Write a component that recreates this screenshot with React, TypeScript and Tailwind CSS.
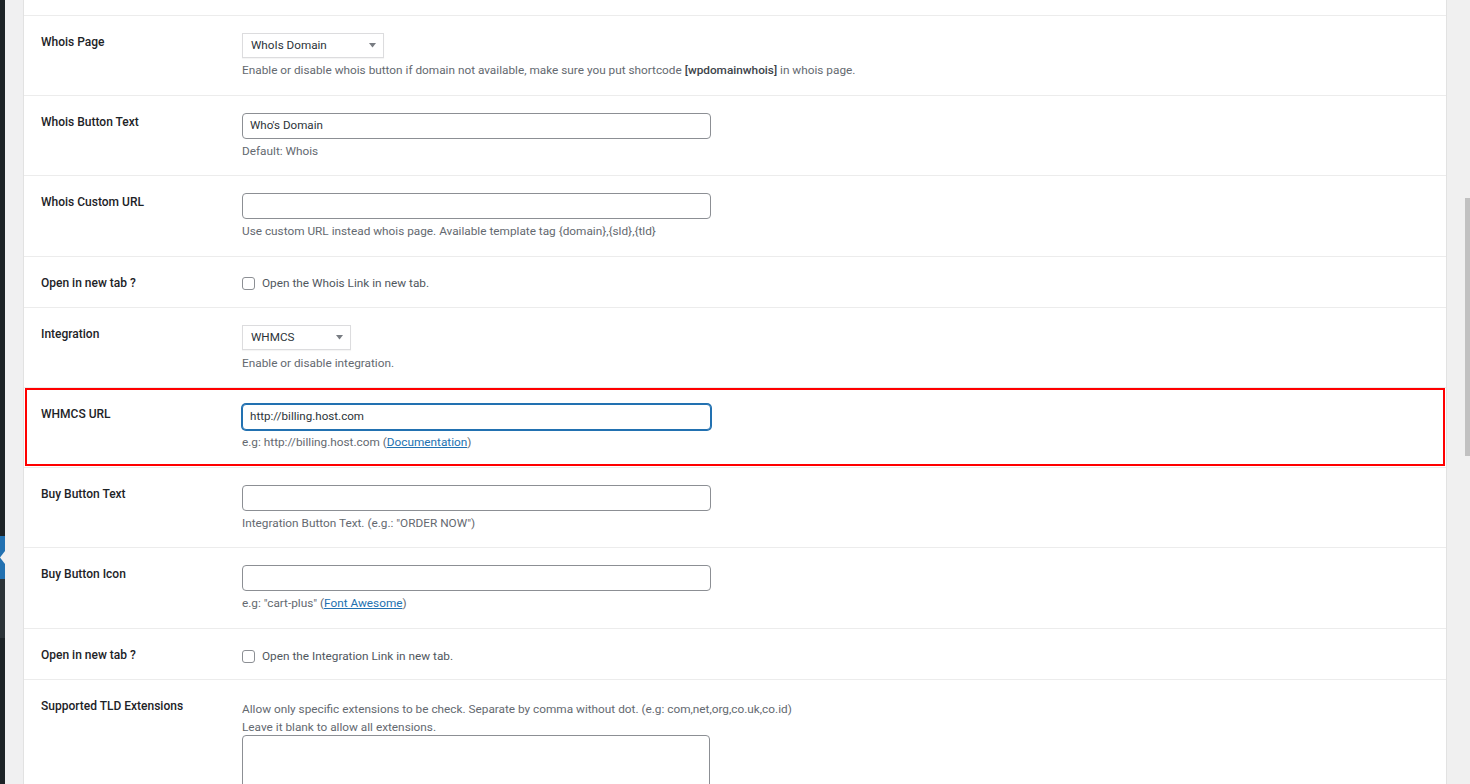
import React from "react";

const font = { fontFamily: 'Roboto, "Noto Sans", Arial, sans-serif' };

function Label({ children, pt = "pt-[17px]" }: { children: React.ReactNode; pt?: string }) {
  return (
    <div className={`w-[201px] shrink-0 ${pt} text-[12px] leading-[18px] font-medium text-[#1d2327]`}>
      {children}
    </div>
  );
}

function Desc({ children, className = "" }: { children: React.ReactNode; className?: string }) {
  return <div className={`text-[11.8px] leading-[18px] text-[#646970] ${className}`}>{children}</div>;
}

function Select({ value, width }: { value: string; width: string }) {
  return (
    <div
      className={`${width} h-[25px] flex items-center justify-between border border-[#dcdcde] bg-white shadow-[0_1px_1px_rgba(0,0,0,0.04)] pl-[8px] pr-[7px] text-[11.7px] text-[#2c3338]`}
    >
      <span>{value}</span>
      <svg width="7" height="5" viewBox="0 0 7 5">
        <path d="M0 0h7L3.5 4.5z" fill="#787c82" />
      </svg>
    </div>
  );
}

function TextInput({ value = "", focus = false }: { value?: string; focus?: boolean }) {
  return (
    <div
      className={`w-[469px] h-[26px] flex items-center rounded-[4px] border bg-white px-[7px] text-[11.6px] text-[#2c3338] ${
        focus ? "border-[#2271b1] shadow-[0_0_0_1px_#2271b1]" : "border-[#8c8f94]"
      }`}
    >
      {value}
    </div>
  );
}

function Checkbox({ label }: { label: string }) {
  return (
    <div className="flex items-center gap-[7px] text-[11.8px] text-[#50575e]">
      <div className="w-[13px] h-[13px] rounded-[3px] border border-[#8c8f94] bg-white" />
      <span>{label}</span>
    </div>
  );
}

function Row({ children, h = "h-[80px]", boxed = false }: { children: React.ReactNode; h?: string; boxed?: boolean }) {
  return (
    <div className={`relative shrink-0 ${h} border-t border-[#ececec] flex pl-[17px]`}>
      {boxed && (
        <div className="absolute left-[1px] right-[1px] top-0 bottom-[1px] border-2 border-[#ff0000] pointer-events-none" />
      )}
      {children}
    </div>
  );
}

export default function App() {
  return (
    <div className="w-[1470px] h-[784px] flex overflow-hidden bg-white" style={font}>
      {/* admin sidebar edge */}
      <div className="w-[5px] shrink-0 flex flex-col bg-[#1d2327]">
        <div className="h-[536px] shrink-0" />
        <div className="h-[43px] shrink-0 bg-[#2271b1] relative">
          <svg className="absolute left-0 top-[15px]" width="5" height="13" viewBox="0 0 5 13">
            <path d="M5 0v13L0 6.5z" fill="#f0f0f1" />
          </svg>
        </div>
        <div className="h-[59px] shrink-0 bg-[#2c3338]" />
        <div className="flex-1" />
      </div>
      {/* gutter */}
      <div className="w-[18px] shrink-0 bg-[#f0f0f1]" />
      {/* panel */}
      <div className="w-[1424px] shrink-0 bg-white border-l border-r border-[#e2e2e2] flex flex-col overflow-hidden">
        <div className="h-[15px] shrink-0" />
        <Row>
          <Label>Whois Page</Label>
          <div className="pt-[17px]">
            <Select value="WhoIs Domain" width="w-[142px]" />
            <Desc className="mt-[3px]">
              Enable or disable whois button if domain not available, make sure you put shortcode{" "}
              <b className="font-medium text-[#3c434a]">[wpdomainwhois]</b> in whois page.
            </Desc>
          </div>
        </Row>
        <Row>
          <Label>Whois Button Text</Label>
          <div className="pt-[17px]">
            <TextInput value="Who's Domain" />
            <Desc className="mt-[3px]">Default: Whois</Desc>
          </div>
        </Row>
        <Row h="h-[81px]">
          <Label>Whois Custom URL</Label>
          <div className="pt-[17px]">
            <TextInput />
            <Desc className="mt-[3px]">Use custom URL instead whois page. Available template tag {"{domain}"},{"{sld}"},{"{tld}"}</Desc>
          </div>
        </Row>
        <Row h="h-[51px]">
          <Label>Open in new tab ?</Label>
          <div className="pt-[18px]">
            <Checkbox label="Open the Whois Link in new tab." />
          </div>
        </Row>
        <Row>
          <Label>Integration</Label>
          <div className="pt-[17px]">
            <Select value="WHMCS" width="w-[109px]" />
            <Desc className="mt-[4px]">Enable or disable integration.</Desc>
          </div>
        </Row>
        <Row boxed>
          <Label>WHMCS URL</Label>
          <div className="pt-[16px]">
            <TextInput value="http://billing.host.com" focus />
            <Desc className="mt-[3px]">
              e.g: http://billing.host.com (<span className="text-[#2271b1] underline">Documentation</span>)
            </Desc>
          </div>
        </Row>
        <Row>
          <Label>Buy Button Text</Label>
          <div className="pt-[17px]">
            <TextInput />
            <Desc className="mt-[3px]">Integration Button Text. (e.g.: "ORDER NOW")</Desc>
          </div>
        </Row>
        <Row h="h-[81px]">
          <Label>Buy Button Icon</Label>
          <div className="pt-[17px]">
            <TextInput />
            <Desc className="mt-[3px]">
              e.g: "cart-plus" (<span className="text-[#2271b1] underline">Font Awesome</span>)
            </Desc>
          </div>
        </Row>
        <Row h="h-[51px]">
          <Label>Open in new tab ?</Label>
          <div className="pt-[19px]">
            <Checkbox label="Open the Integration Link in new tab." />
          </div>
        </Row>
        <Row h="h-[200px]">
          <Label pt="pt-[17px]">Supported TLD Extensions</Label>
          <div className="pt-[20px]">
            <Desc className="leading-[17px]">
              Allow only specific extensions to be check. Separate by comma without dot. (e.g: com,net,org,co.uk,co.id)
            </Desc>
            <Desc className="leading-[17px]">Leave it blank to allow all extensions.</Desc>
            <div className="mt-[-1px] w-[468px] h-[80px] rounded-[4px] border border-[#8c8f94] bg-white" />
          </div>
        </Row>
      </div>
      {/* scrollbar */}
      <div className="flex-1 bg-[#f0f0f0] relative">
        <div className="absolute right-0 top-[198px] w-[5px] h-[258px] bg-[#c1c1c1]" />
      </div>
    </div>
  );
}
